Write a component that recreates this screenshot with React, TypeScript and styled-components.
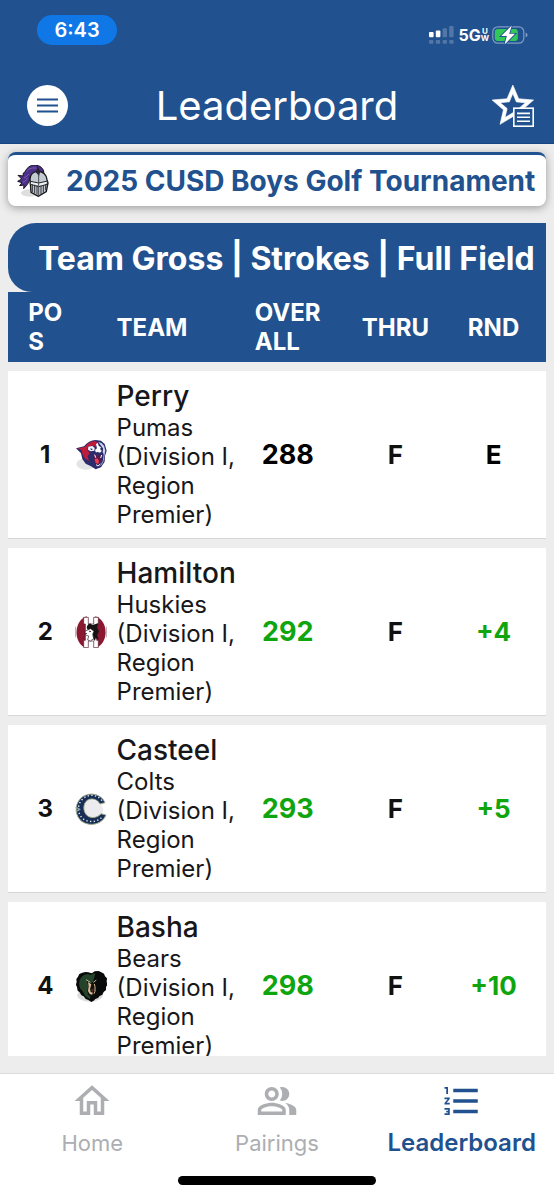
import React from "react";
import styled, { createGlobalStyle } from "styled-components";
import { MdFormatListNumbered, MdOutlineHome, MdOutlinePeopleAlt } from "react-icons/md";

const BLUE = "#21518e";
const GREEN = "#0ea50e";

const GlobalStyle = createGlobalStyle`
  *, *::before, *::after { box-sizing: border-box; }
  body { margin: 0; background: #ededed; font-family: Inter, "Liberation Sans", sans-serif; color: #17171a; }
  button { font: inherit; border: 0; padding: 0; background: none; color: inherit; cursor: pointer; }
`;

const Screen = styled.div`
  display: flex;
  flex-direction: column;
  height: 100vh;
`;

const TopBar = styled.header`
  background: ${BLUE};
  border-bottom: 1px solid #194681;
  color: #fff;
`;

const StatusBar = styled.div`
  display: flex;
  justify-content: space-between;
  align-items: flex-start;
  padding: 15px 26px 0 37px;
  height: 68px;
`;

const Clock = styled.div`
  width: 80px;
  height: 30px;
  border-radius: 15px;
  background: #0f78e6;
  font-size: 20px;
  font-weight: 600;
  line-height: 30px;
  text-align: center;
`;

const Signals = styled.div`
  display: flex;
  align-items: center;
  height: 20px;
  margin-top: 10px;
`;

const Network = styled.span`
  margin-left: 3px;
  font-size: 16px;
  font-weight: 700;
  line-height: 20px;
`;

const NetworkBand = styled.span`
  display: flex;
  flex-direction: column;
  margin-right: 3px;
  font-size: 8px;
  font-weight: 700;
  line-height: 7px;
  text-align: center;
`;

const TitleBar = styled.div`
  display: grid;
  grid-template-columns: 1fr auto 1fr;
  align-items: center;
  height: 75px;
  padding: 0 20px;
`;

const PageTitle = styled.h1`
  margin: 0;
  font-size: 40px;
  font-weight: 400;
  line-height: 48px;
`;

const MenuButton = styled.button`
  display: grid;
  place-items: center;
  width: 41px;
  height: 41px;
  margin-left: 7px;
  border-radius: 50%;
  background: #fff;
`;

const FavouritesButton = styled.button`
  display: block;
  justify-self: end;
  height: 42px;
`;

const Main = styled.main`
  display: flex;
  flex-direction: column;
  flex: 1;
  min-height: 0;
  padding: 8px 8px 17px;
`;

const EventCard = styled.section`
  display: flex;
  align-items: center;
  gap: 17px;
  flex: none;
  height: 54px;
  padding: 0 9px;
  border-top: 3px solid ${BLUE};
  border-radius: 8px;
  background: #fff;
  box-shadow: 0 2px 8px rgba(0, 0, 0, 0.35);
`;

const EventName = styled.h2`
  margin: 0;
  color: ${BLUE};
  font-size: 28px;
  font-weight: 700;
  line-height: 32px;
  white-space: nowrap;
`;

const BoardTitle = styled.h2`
  flex: none;
  margin: 17px 0 0;
  padding: 0 12px 0 30px;
  height: 69px;
  border-radius: 28px 0 0 24px;
  background: ${BLUE};
  color: #fff;
  font-size: 32px;
  font-weight: 700;
  line-height: 72px;
  white-space: nowrap;
`;

const BoardScroll = styled.div`
  flex: 1;
  min-height: 0;
  overflow-y: auto;
  scrollbar-width: none;
`;

const Board = styled.table`
  width: 100%;
  table-layout: fixed;
  border-collapse: separate;
  border-spacing: 0;
`;

const HeadCell = styled.th<{ $left?: boolean }>`
  height: 70px;
  padding: 0 0 0 ${(p) => (p.$left ? 1 : 0)}px;
  background: ${BLUE};
  color: #fff;
  font-size: 24px;
  font-weight: 700;
  line-height: 29px;
  text-align: ${(p) => (p.$left ? "left" : "center")};

  &:first-child { padding-left: 10px; }
  &:last-child { padding-right: 8px; }
`;

const HeadLines = styled.span`
  display: inline-block;
  text-align: left;
`;

const Gap = styled.tr`
  height: 9px;
`;

const Cell = styled.td<{ $color?: string; $size?: number }>`
  padding: 0;
  height: 168px;
  background: #fff;
  border-bottom: 1px solid #d4d6da;
  color: ${(p) => p.$color ?? "#111"};
  font-size: ${(p) => p.$size ?? 27}px;
  font-weight: 700;
  text-align: center;

  &:first-child { padding-left: 10px; }
  &:last-child { padding-right: 8px; }
`;

const LogoCell = styled(Cell)`
  padding-left: 2px;
`;

const TeamCell = styled(Cell)`
  padding-left: 1px;
  color: #17171a;
  font-weight: 400;
  text-align: left;
`;

const TeamName = styled.div`
  font-size: 28px;
  font-weight: 500;
  line-height: 33px;
`;

const TeamDetail = styled.div`
  font-size: 24px;
  line-height: 29px;
`;

const LogoSvg = styled.svg`
  display: block;
  flex: none;
  width: 32px;
  height: 32px;
`;

const TabBar = styled.nav`
  display: grid;
  grid-template-columns: repeat(3, 1fr);
  flex: none;
  padding-top: 6px;
  border-top: 1px solid #dcdcdc;
  background: #fff;
`;

const Tab = styled.a<{ $active?: boolean }>`
  display: flex;
  flex-direction: column;
  align-items: center;
  gap: 7px;
  color: ${(p) => (p.$active ? BLUE : "#acaeb1")};
  font-size: ${(p) => (p.$active ? 24 : 22)}px;
  font-weight: ${(p) => (p.$active ? 600 : 400)};
  line-height: 28px;
  text-decoration: none;
`;

const HomeIndicator = styled.div`
  flex: none;
  padding: 19px 0 14px;
  background: #fff;

  &::before {
    content: "";
    display: block;
    width: 198px;
    height: 9px;
    margin: 0 auto;
    border-radius: 5px;
    background: #000;
  }
`;

const SignalIcon = () => (
  <svg width="26" height="18" viewBox="0 0 26 18" fill="#fff" aria-hidden="true">
    <rect x="0" y="6" width="4.6" height="5.2" rx="1" />
    <rect x="6.8" y="4.4" width="4.6" height="6.8" rx="1" />
    <g opacity=".22">
      <rect x="13.6" y="2.2" width="4.4" height="9" rx="1" />
      <rect x="20.2" y="0" width="4.4" height="11.2" rx="1" />
      <rect x="0" y="14" width="4.4" height="3.8" rx="1" />
      <rect x="6.8" y="14" width="4.4" height="3.8" rx="1" />
      <rect x="13.6" y="14" width="4.4" height="3.8" rx="1" />
      <rect x="20.2" y="14" width="4.4" height="3.8" rx="1" />
    </g>
  </svg>
);

const BatteryIcon = () => (
  <svg width="36" height="20" viewBox="0 0 36 20" aria-label="Battery charging" role="img">
    <rect x=".8" y="1.8" width="31" height="16.4" rx="5" fill="none" stroke="#7d9cc4" strokeWidth="1.2" />
    <path d="M33.6 7.5q2 .8 2 2.4t-2 2.4z" fill="#7d9cc4" />
    <rect x="2.8" y="4" width="23" height="12" rx="3" fill="#32c758" />
    <path d="M19.8 .6 9.2 11h5.6l-2.2 8.6L23 8.8h-5.8z" fill="#fff" stroke={BLUE} strokeWidth="1.8" paintOrder="stroke" />
  </svg>
);

const MenuIcon = () => (
  <svg width="21" height="15" viewBox="0 0 21 15" stroke={BLUE} strokeWidth="2.2" aria-hidden="true">
    <path d="M0 1.5h21M0 7.5h21M0 13.5h21" />
  </svg>
);

const StarListIcon = () => (
  <svg width="42" height="42" viewBox="0 0 42 42" fill="#fff" aria-hidden="true">
    <path
      transform="translate(-4 -4.1) scale(2.07)"
      stroke="#fff"
      strokeWidth=".3"
      d="M22 9.24l-7.19-.62L12 2 9.19 8.63 2 9.24l5.46 4.73L5.82 21 12 17.27 18.18 21l-1.63-7.03L22 9.24zM12 15.4l-3.76 2.27 1-4.28-3.32-2.88 4.38-.38L12 6.1l1.71 4.04 4.38.38-3.32 2.88 1 4.28L12 15.4z"
    />
    <rect x="21.8" y="23.2" width="19.4" height="18" fill={BLUE} stroke="#fff" strokeWidth="1.6" />
    <path d="M25 28.4h13M25 32.3h13M25 36.2h13" stroke="#fff" strokeWidth="1.6" />
  </svg>
);

const KnightLogo = () => (
  <LogoSvg viewBox="50 72 96 96" role="img" aria-label="Knight">
    <ellipse cx="88" cy="156" rx="26" ry="11" fill="#dedede" />
    <path d="M74 93C80 77 96 69 110 73c14 3 22 14 20 25-8-8-16-9-23-5-8 3-10 9-17 13-1 14-8 25-20 37l1-11-13 2 7-9-13-4 12-7-11-11 15 2 1-9z" fill="#4d3089" stroke="#17151c" strokeWidth="3" />
    <path d="M78 91c9-9 20-12 31-9M71 110c7-2 11-6 14-11M67 124c7-2 12-7 14-13" fill="none" stroke="#8160ad" strokeWidth="3" />
    <path d="M89 114c1-14 11-23 25-23 14 1 24 10 26 25l3 10-5 26-24 14-22-12z" fill="#c4cbd2" stroke="#18191c" strokeWidth="4" />
    <path d="M111 74l9 17-4 15-9-12z" fill="#2a2335" />
    <path d="M90 121l25 5 27-6-2 10-25 7-25-7z" fill="#eef2f5" stroke="#222" strokeWidth="3" />
    <path d="M96 130v23M103 131v26M110 133v28M122 134v25M129 132v23M136 130v18" stroke="#30343a" strokeWidth="3" />
    <path d="M115 98v65" stroke="#4a4e55" strokeWidth="3" />
  </LogoSvg>
);

const PumaLogo = () => (
  <LogoSvg viewBox="45 57 96 96" role="img" aria-label="Perry Pumas">
    <ellipse cx="78" cy="132" rx="29" ry="17" fill="#e4e4e6" />
    <path d="M48 85l24-6c9-12 21-19 35-19l16 2 11 10 6 20-5 16-1 17-11 17-16 6-14-9-16-8-10-14-4-17-6-6z" fill="#2b2c6e" />
    <path d="M52 85l22-4c8-11 19-17 32-18l7 6-6 11-10-3-13 3-2 10 7 9-6 10 4 14-13-8-7-14-2-11z" fill="#c01c3a" />
    <path d="M85 80l12-2 7 6-1 8-11 2-8-5z" fill="#f5f6fa" />
    <path d="M90 85l9 2-5 4z" fill="#2b2c6e" />
    <path d="M115 66l9 3 8 8 4 15-3 14-5-9 1-12-8-11z" fill="#cfd6ea" />
    <path d="M108 73l5-5 3 9 8 6-4 4 7 4-7 7-9-3-3 3-3-8 6-5z" fill="#fff" />
    <path d="M122 83l7 3-1 7-6-2z" fill="#2b2c6e" />
    <path d="M102 102l10 5 12-3 2 8-4 15-8 7-8-4-6-11z" fill="#5b1a4c" />
    <path d="M104 118l8-3 5 8-2 9-8-3z" fill="#ee4053" />
    <path d="M104 104l3 9M125 105l-3 9M108 134l6 4 7-6" fill="none" stroke="#fff" strokeWidth="3" />
    <path d="M133 98l-3 24-8 15" fill="none" stroke="#9eaad0" strokeWidth="3" />
  </LogoSvg>
);

const HuskyLogo = () => (
  <LogoSvg viewBox="45 48 96 96" role="img" aria-label="Hamilton Huskies">
    <path d="M47 80v32M140 80v32" stroke="#b7a9ae" strokeWidth="3" />
    <path d="M80 49v95C40 134 39 62 80 49z" fill="#8b1831" />
    <path d="M106 49v95c40-10 42-82 0-95z" fill="#8b1831" />
    <path d="M71 52h14v20h16V52h14v20h-5v49h5v22h-14v-20H85v20H71v-22h5V72h-5z" fill="#fff" stroke="#4e1927" strokeWidth="2" />
    <path d="M88 48h10v20H88zM88 127h10v18H88z" fill="#fff" />
    <path d="M80 83c2-9 7-13 12-12l5 4 18-5-4 12 6 13-6 10 5 13-9-3-2 8-8-9 2-14-7-14-8 5z" fill="#151313" />
    <path d="M76 93l16-7 10 8-4 8 3 14-10 7-8-3 3-12-9-3-2-6z" fill="#fff" stroke="#242021" strokeWidth="2" />
    <path d="M86 92l8 1-4 4zM75 98l7 2-5 3z" fill="#111" />
  </LogoSvg>
);

const ColtLogo = () => (
  <LogoSvg viewBox="45 51 96 96" role="img" aria-label="Casteel Colts">
    <ellipse cx="92" cy="103" rx="37" ry="31" fill="#ececee" />
    <path d="M135 80C122 51 83 46 61 68c-19 20-16 54 6 69 24 16 60 8 71-20l-15-4c-11 14-35 16-45 2-10-13-8-34 4-42 12-8 30-4 38 11z" fill="#172f57" stroke="#a3ae8d" strokeWidth="3" />
    <path d="M126 74C110 54 84 53 67 70c-18 19-14 49 6 61 18 10 42 6 54-9" fill="none" stroke="#eef1f4" strokeWidth="4" strokeDasharray="4 7" />
    <path d="M47 93l12 7-11 7" fill="none" stroke="#8fa0ad" strokeWidth="4" />
  </LogoSvg>
);

const BearLogo = () => (
  <LogoSvg viewBox="45 51 96 96" role="img" aria-label="Basha Bears">
    <ellipse cx="90" cy="127" rx="38" ry="19" fill="#dcdcdc" />
    <path d="M95 61l9-6 12-1 8 4 8 4 3 8 6 6-1 10 2 9-4 8v8l-7 6-4 8-8 4-5 6-8 3-5 5-7 4-9-6-8-3-6-8-7-3-5-9-6-5-2-10-3-8 2-9-1-8 5-7 4-8 9-4 9-2 9 1z" fill="#080b0a" />
    <path d="M93 66l8-5 5 1-7 25-4 6-5 46-14-10-8-14-8-9-3-14 2-12 6-9 8-6 11-2z" fill="#24432a" />
    <path d="M80 83l13 7 13-7 1 8-3 9 3 15-5 13-9 4-9-7-2-12 3-15z" fill="#11120f" />
    <path d="M84 87l10 7-4 15 2 8 7 2-3 6-7-2-5-9 2-14z" fill="#d8b892" />
    <path d="M103 93l2 8v14l-3 7" fill="none" stroke="#d8b892" strokeWidth="3" />
    <path d="M93 108l7-1 2 5-4 5-5-2z" fill="#4a2420" />
    <path d="M78 80l13 8M109 81l-9 7" stroke="#b9bd9a" strokeWidth="3" />
  </LogoSvg>
);

const teams = [
  { pos: 1, name: "Perry", mascot: "Pumas", Logo: PumaLogo, total: "288", thru: "F", round: "E", over: false },
  { pos: 2, name: "Hamilton", mascot: "Huskies", Logo: HuskyLogo, total: "292", thru: "F", round: "+4", over: true },
  { pos: 3, name: "Casteel", mascot: "Colts", Logo: ColtLogo, total: "293", thru: "F", round: "+5", over: true },
  { pos: 4, name: "Basha", mascot: "Bears", Logo: BearLogo, total: "298", thru: "F", round: "+10", over: true },
];

export default function App() {
  return (
    <Screen>
      <GlobalStyle />
      <TopBar>
        <StatusBar>
          <Clock>6:43</Clock>
          <Signals>
            <SignalIcon />
            <Network>5G</Network>
            <NetworkBand>
              <span>U</span>
              <span>W</span>
            </NetworkBand>
            <BatteryIcon />
          </Signals>
        </StatusBar>
        <TitleBar>
          <MenuButton aria-label="Menu">
            <MenuIcon />
          </MenuButton>
          <PageTitle>Leaderboard</PageTitle>
          <FavouritesButton aria-label="Favourites">
            <StarListIcon />
          </FavouritesButton>
        </TitleBar>
      </TopBar>

      <Main>
        <EventCard>
          <KnightLogo />
          <EventName>2025 CUSD Boys Golf Tournament</EventName>
        </EventCard>
        <BoardTitle>Team Gross | Strokes | Full Field</BoardTitle>
        <BoardScroll>
          <Board>
            <colgroup>
              <col style={{ width: "12%" }} />
              <col style={{ width: "8%" }} />
              <col style={{ width: "22%" }} />
              <col style={{ width: "20%" }} />
              <col style={{ width: "20%" }} />
              <col style={{ width: "18%" }} />
            </colgroup>
            <thead>
              <tr>
                <HeadCell>
                  <HeadLines>PO<br />S</HeadLines>
                </HeadCell>
                <HeadCell />
                <HeadCell $left>TEAM</HeadCell>
                <HeadCell>
                  <HeadLines>OVER<br />ALL</HeadLines>
                </HeadCell>
                <HeadCell>THRU</HeadCell>
                <HeadCell>RND</HeadCell>
              </tr>
            </thead>
            {teams.map(({ pos, name, mascot, Logo, total, thru, round, over }) => (
              <tbody key={name}>
                <Gap aria-hidden="true" />
                <tr>
                  <Cell $size={24}>{pos}</Cell>
                  <LogoCell>
                    <Logo />
                  </LogoCell>
                  <TeamCell>
                    <TeamName>{name}</TeamName>
                    <TeamDetail>{`${mascot} (Division\u00a0I, Region Premier)`}</TeamDetail>
                  </TeamCell>
                  <Cell $color={over ? GREEN : "#000"}>{total}</Cell>
                  <Cell $size={26}>{thru}</Cell>
                  <Cell $size={26} $color={over ? GREEN : "#000"}>{round}</Cell>
                </tr>
              </tbody>
            ))}
          </Board>
        </BoardScroll>
      </Main>

      <TabBar aria-label="Main">
        <Tab href="#home">
          <MdOutlineHome size={42} />
          Home
        </Tab>
        <Tab href="#pairings">
          <MdOutlinePeopleAlt size={42} />
          Pairings
        </Tab>
        <Tab href="#leaderboard" $active aria-current="page">
          <MdFormatListNumbered size={42} />
          Leaderboard
        </Tab>
      </TabBar>
      <HomeIndicator />
    </Screen>
  );
}
